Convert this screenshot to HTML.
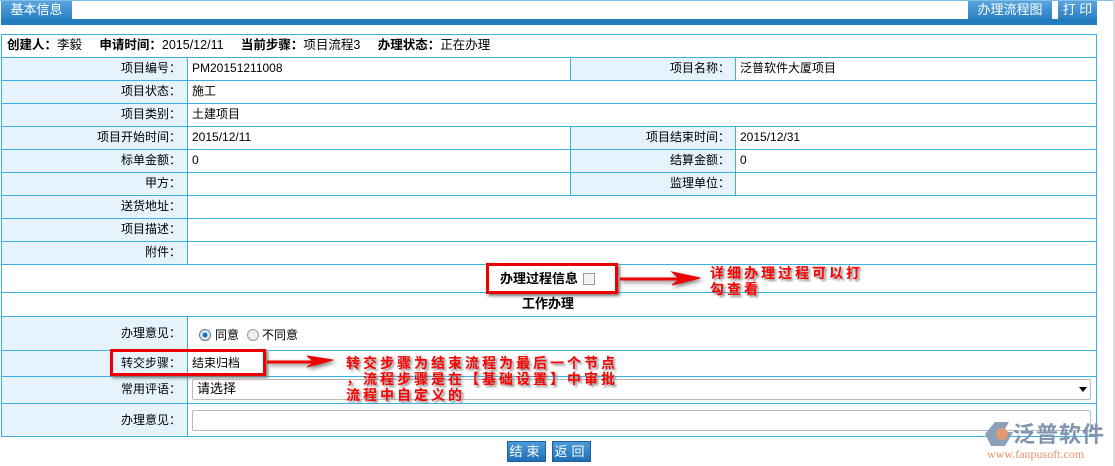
<!DOCTYPE html>
<html><head><meta charset="utf-8"><style>
*{margin:0;padding:0;box-sizing:border-box}
body{width:1115px;height:466px;overflow:hidden;background:#fff;font-family:"Liberation Sans","Noto Sans CJK SC",sans-serif;font-size:12px;color:#000;position:relative}
.a{position:absolute}
.tab{background:linear-gradient(#5aa5dd,#2a7fc4);color:#fff;font-size:13px;text-align:center;line-height:18px}
.l{background:#e6f3fc}
.hl{position:absolute;left:1px;width:1096px;height:1px;background:#3bb0e3}
.vl{position:absolute;width:1px;background:#3bb0e3}
.t{position:absolute;line-height:22px;white-space:nowrap}
.r{text-align:right}
.red{color:#f00;font-weight:bold;font-size:14px;letter-spacing:3px;text-shadow:2px 2px 2px #888;line-height:16px}
.box{position:absolute;border:3px solid #e00;box-shadow:2px 2px 3px #777}
.btn{position:absolute;background:linear-gradient(#4d9ad8,#1f6fb5);color:#fff;font-size:13px;text-align:center;line-height:20px;letter-spacing:4px;border:1px solid #1b5f9c}
</style></head><body>
<div class="a" style="left:0;top:0;width:1115px;height:1px;background:#7fbfec"></div>
<div class="a tab" style="left:1px;top:1px;width:71px;height:18px">基本信息</div>
<div class="a tab" style="left:968px;top:1px;width:84px;height:18px">办理流程图</div>
<div class="a tab" style="left:1058px;top:1px;width:39px;height:18px">打 印</div>
<div class="a" style="left:1px;top:19px;width:1096px;height:6px;background:#227cc0"></div>
<div class="a" style="left:1113px;top:0;width:2px;height:466px;background:#ddd"></div>

<div class="a l" style="left:1px;top:57px;width:186px;height:207px"></div>
<div class="a l" style="left:570px;top:57px;width:165px;height:23px"></div>
<div class="a l" style="left:570px;top:126px;width:165px;height:69px"></div>
<div class="a l" style="left:1px;top:316px;width:186px;height:120px"></div>

<div class="hl" style="top:34px"></div><div class="hl" style="top:57px"></div><div class="hl" style="top:80px"></div><div class="hl" style="top:103px"></div><div class="hl" style="top:126px"></div><div class="hl" style="top:149px"></div><div class="hl" style="top:172px"></div><div class="hl" style="top:195px"></div><div class="hl" style="top:218px"></div><div class="hl" style="top:241px"></div><div class="hl" style="top:264px"></div><div class="hl" style="top:292px"></div><div class="hl" style="top:316px"></div><div class="hl" style="top:350px"></div><div class="hl" style="top:376px"></div><div class="hl" style="top:403px"></div><div class="hl" style="top:436px"></div>
<div class="vl" style="left:1px;top:34px;height:403px"></div>
<div class="vl" style="left:1096px;top:34px;height:403px"></div>
<div class="vl" style="left:187px;top:57px;height:207px"></div>
<div class="vl" style="left:187px;top:316px;height:120px"></div>
<div class="vl" style="left:570px;top:57px;height:23px"></div><div class="vl" style="left:735px;top:57px;height:23px"></div>
<div class="vl" style="left:570px;top:126px;height:69px"></div><div class="vl" style="left:735px;top:126px;height:69px"></div>

<div class="t" style="left:7px;top:34px;font-size:12.5px"><b>创建人：</b>李毅 &nbsp; &nbsp; <b>申请时间：</b>2015/12/11 &nbsp; &nbsp; <b>当前步骤：</b>项目流程3 &nbsp; &nbsp; <b>办理状态：</b>正在办理</div>

<div class="t r" style="left:1px;width:180px;top:57px">项目编号：</div><div class="t" style="left:192px;top:57px">PM20151211008</div>
<div class="t r" style="left:570px;width:160px;top:57px">项目名称：</div><div class="t" style="left:740px;top:57px">泛普软件大厦项目</div>
<div class="t r" style="left:1px;width:180px;top:80px">项目状态：</div><div class="t" style="left:192px;top:80px">施工</div>
<div class="t r" style="left:1px;width:180px;top:103px">项目类别：</div><div class="t" style="left:192px;top:103px">土建项目</div>
<div class="t r" style="left:1px;width:180px;top:126px">项目开始时间：</div><div class="t" style="left:192px;top:126px">2015/12/11</div>
<div class="t r" style="left:570px;width:160px;top:126px">项目结束时间：</div><div class="t" style="left:740px;top:126px">2015/12/31</div>
<div class="t r" style="left:1px;width:180px;top:149px">标单金额：</div><div class="t" style="left:192px;top:149px">0</div>
<div class="t r" style="left:570px;width:160px;top:149px">结算金额：</div><div class="t" style="left:740px;top:149px">0</div>
<div class="t r" style="left:1px;width:180px;top:172px">甲方：</div>
<div class="t r" style="left:570px;width:160px;top:172px">监理单位：</div>
<div class="t r" style="left:1px;width:180px;top:195px">送货地址：</div>
<div class="t r" style="left:1px;width:180px;top:218px">项目描述：</div>
<div class="t r" style="left:1px;width:180px;top:241px">附件：</div>

<div class="t" style="left:500px;top:268px;font-weight:bold;font-size:13px">办理过程信息</div>
<div class="a" style="left:583px;top:273px;width:12px;height:12px;border:1px solid #999;background:#f4f4f4"></div>
<div class="box" style="left:486px;top:263px;width:132px;height:31px"></div>
<div class="t" style="left:522px;top:293px;font-weight:bold;font-size:13px">工作办理</div>

<div class="t r" style="left:1px;width:180px;top:322px">办理意见：</div>
<div class="a" style="left:199px;top:329px;width:12px;height:12px;border-radius:50%;border:1px solid #678;background:radial-gradient(#1a6fc0 30%,#dfe9f5 40%)"></div>
<div class="t" style="left:215px;top:324px">同意</div>
<div class="a" style="left:247px;top:329px;width:12px;height:12px;border-radius:50%;border:1px solid #999;background:#eee"></div>
<div class="t" style="left:262px;top:324px">不同意</div>

<div class="t r" style="left:1px;width:180px;top:352px">转交步骤：</div><div class="t" style="left:192px;top:352px">结束归档</div>
<div class="box" style="left:110px;top:349px;width:156px;height:27px"></div>

<div class="t r" style="left:1px;width:180px;top:378px">常用评语：</div>
<div class="a" style="left:192px;top:379px;width:899px;height:21px;border:1px solid #bbb;border-radius:2px"></div>
<div class="t" style="left:197px;top:378px;font-size:13px">请选择</div>
<div class="a" style="left:1079px;top:387px;width:0;height:0;border-left:4px solid transparent;border-right:4px solid transparent;border-top:5px solid #000"></div>

<div class="t r" style="left:1px;width:180px;top:409px">办理意见：</div>
<div class="a" style="left:192px;top:410px;width:899px;height:21px;border:1px solid #bbb;border-radius:2px"></div>

<svg class="a" style="left:0;top:0" width="1115" height="466">
<g fill="#e00" stroke="#e00" style="filter:drop-shadow(2px 2px 2px #777)">
<line x1="620" y1="279" x2="680" y2="279" stroke-width="3"/><polygon points="672,272 700,278 672,285 680,279"/>
<line x1="267" y1="362" x2="315" y2="362" stroke-width="3"/><polygon points="307,356 333,360 307,367 315,362"/>
</g></svg>
<div class="a red" style="left:710px;top:265px">详细办理过程可以打<br>勾查看</div>
<div class="a red" style="left:346px;top:355px">转交步骤为结束流程为最后一个节点<br>，流程步骤是在【基础设置】中审批<br>流程中自定义的</div>

<svg class="a" style="left:985px;top:420px" width="30" height="28"><polygon points="10,2 24,2 18,12 28,12 20,26 6,26 0,14" fill="#8aa0b8"/><circle cx="17" cy="14" r="6" fill="#e29a74"/></svg>
<div class="a" style="left:1013px;top:417px;font-size:22px;color:#8195ae;letter-spacing:1px;font-weight:bold">泛普软件</div>
<div class="a" style="left:987px;top:447px;font-size:12px;color:#e2936c;font-family:'Liberation Serif',serif">www.fanpusoft.com</div>

<div class="btn" style="left:507px;top:441px;width:39px;height:21px">结束</div>
<div class="btn" style="left:552px;top:441px;width:39px;height:21px">返回</div>
</body></html>
